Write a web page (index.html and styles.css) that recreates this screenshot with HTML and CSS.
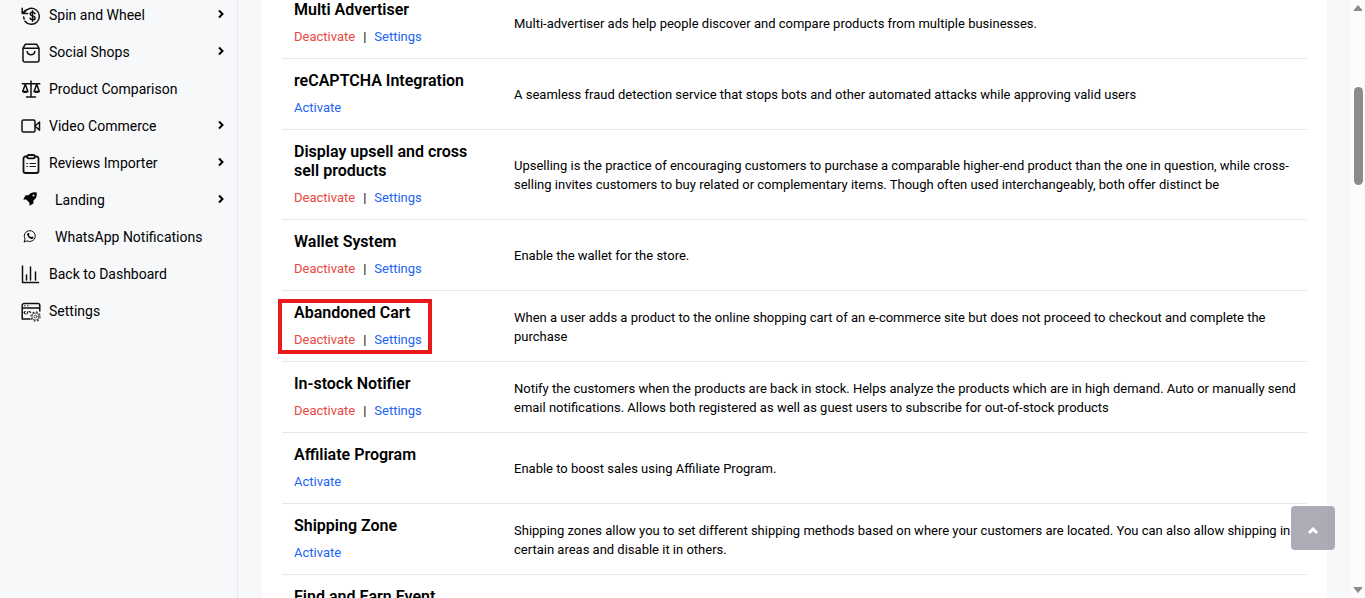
FILE: index.html
```
<!DOCTYPE html>
<html lang="en">
<head>
    <meta charset="UTF-8">
    <meta name="viewport" content="width=device-width, initial-scale=1.0">
    <title>Add-ons</title>
    <link rel="stylesheet" href="styles.css">
</head>
<body>
    <div class="page">
        <nav class="sidebar">
            <a class="menu-item" href="#">
                <svg class="menu-icon" viewBox="0 0 20 20">
                    <path d="M3.400 6.400A8 8 0 1 1 4 15.200M1.200 2.200v5.400h5.400M1.400 7.200l3-3M2.600 11l.6 2"/>
                    <path d="M14 7.600c-.4-1-1.300-1.400-2.500-1.400-1.400 0-2.400.6-2.400 1.800 0 2.600 5 1.200 5 3.900 0 1.200-1 1.900-2.500 1.900-1.300 0-2.300-.5-2.600-1.600M11.500 4.800v10.400"/>
                </svg>
                <span>Spin and Wheel</span>
                <svg class="arrow" viewBox="0 0 8 10"><path d="M2 1.500L5.500 5 2 8.500"/></svg>
            </a>
            <a class="menu-item" href="#">
                <svg class="menu-icon" viewBox="0 0 20 20">
                    <path d="M2 5.200L4.400 1.200h11.200L18 5.200V17a2 2 0 0 1-2 2H4a2 2 0 0 1-2-2zM2 5.200h16M6.200 8.600c.6 4.200 7 4.200 7.600 0"/>
                </svg>
                <span>Social Shops</span>
                <svg class="arrow" viewBox="0 0 8 10"><path d="M2 1.500L5.500 5 2 8.500"/></svg>
            </a>
            <a class="menu-item" href="#">
                <svg class="menu-icon" viewBox="0 0 20 20">
                    <path d="M10 1v16M5.500 17h9M1.200 3.800h17.600M4.300 4.200L1.700 11.500h5.200zM15.700 4.200l-2.600 7.300h5.200z"/>
                    <path class="solid" d="M1.200 11h6.200c-.5 2.800-5.700 2.800-6.200 0zM12.600 11h6.200c-.5 2.800-5.700 2.800-6.200 0z"/>
                </svg>
                <span>Product Comparison</span>
            </a>
            <a class="menu-item" href="#">
                <svg class="menu-icon" viewBox="0 0 20 20">
                    <rect x="1" y="3" width="13" height="12" rx="1.500"/>
                    <path d="M14 9l4.500-4v8.200z"/>
                </svg>
                <span>Video Commerce</span>
                <svg class="arrow" viewBox="0 0 8 10"><path d="M2 1.500L5.500 5 2 8.500"/></svg>
            </a>
            <a class="menu-item" href="#">
                <svg class="menu-icon bold" viewBox="0 0 20 20">
                    <path d="M6 2.500H4.500a2 2 0 0 0-2 2V17a2 2 0 0 0 2 2h11a2 2 0 0 0 2-2V4.500a2 2 0 0 0-2-2H14"/>
                    <rect x="6.200" y="1" width="7.600" height="3.400" rx="1.600"/>
                    <path class="thin" d="M5.800 9.500h.6M5.800 12.500h.6M9 9.500h5.500M9 12.500h5.500"/>
                </svg>
                <span>Reviews Importer</span>
                <svg class="arrow" viewBox="0 0 8 10"><path d="M2 1.500L5.500 5 2 8.500"/></svg>
            </a>
            <a class="menu-item small" href="#">
                <svg class="menu-icon" viewBox="0 0 14 14">
                    <path class="shape" fill-rule="evenodd" d="M13.600.4C9.800-.2 7.300 1 5.500 3.200H2.600L.2 7.500h3L6.500 10.800v3l3.900-2.400V8.500C13 6.700 14.200 4.200 13.600.4zM10.500 2.600a1 1 0 1 1 0 2 1 1 0 0 1 0-2z"/>
                </svg>
                <span>Landing</span>
                <svg class="arrow" viewBox="0 0 8 10"><path d="M2 1.500L5.500 5 2 8.500"/></svg>
            </a>
            <a class="menu-item small" href="#">
                <svg class="menu-icon" viewBox="0 0 14 14">
                    <path d="M1.200 12.800l.8-2.900a5.500 5.500 0 1 1 2.200 2.100z"/>
                    <path class="shape" d="M5 3.900l.8 0 .7 1.600-.6.8c.5 1 1.200 1.600 2.200 2l.8-.8 1.600.8c0 1.200-.8 1.700-1.700 1.700C6.500 9.800 4.200 7.300 4.200 5.300c0-.7.3-1.200.8-1.400z"/>
                </svg>
                <span>WhatsApp Notifications</span>
            </a>
            <a class="menu-item" href="#">
                <svg class="menu-icon" viewBox="0 0 20 20">
                    <path d="M1.500 1v16.500h16M5.500 15v-5M9.500 15V2M14.500 15V7"/>
                </svg>
                <span>Back to Dashboard</span>
            </a>
            <a class="menu-item" href="#">
                <svg class="menu-icon" viewBox="0 0 20 20">
                    <path d="M9 17H1.200V3.500a2 2 0 0 1 2-2h13.600a2 2 0 0 1 2 2V9M1.200 6h17.600"/>
                    <path class="thin" d="M3.500 3.800h.6M6.500 3.800h.6M4.200 9.500L3 10.700l1.200 1.200M7 9.500l-1 2.400M8.600 9.500l1 1"/>
                    <circle class="cog" cx="14.500" cy="14.500" r="4.600"/>
                    <circle class="ring" cx="14.500" cy="14.500" r="3.600"/>
                    <circle class="ring" cx="14.500" cy="14.500" r="1.400"/>
                </svg>
                <span>Settings</span>
            </a>
        </nav>

        <main class="content">
            <div class="panel">
                <table class="addons">
                    <tbody>
                        <tr>
                            <td class="name">
                                <h3>Multi Advertiser</h3>
                                <div class="actions"><a class="off" href="#">Deactivate</a><span>|</span><a href="#">Settings</a></div>
                            </td>
                            <td>Multi-advertiser ads help people discover and compare products from multiple businesses.</td>
                        </tr>
                        <tr>
                            <td class="name">
                                <h3>reCAPTCHA Integration</h3>
                                <div class="actions"><a href="#">Activate</a></div>
                            </td>
                            <td>A seamless fraud detection service that stops bots and other automated attacks while approving valid users</td>
                        </tr>
                        <tr>
                            <td class="name">
                                <h3>Display upsell and cross sell products</h3>
                                <div class="actions"><a class="off" href="#">Deactivate</a><span>|</span><a href="#">Settings</a></div>
                            </td>
                            <td>Upselling is the practice of encouraging customers to purchase a comparable higher-end product than the one in question, while cross-selling invites customers to buy related or complementary items. Though often used interchangeably, both offer distinct be</td>
                        </tr>
                        <tr>
                            <td class="name">
                                <h3>Wallet System</h3>
                                <div class="actions"><a class="off" href="#">Deactivate</a><span>|</span><a href="#">Settings</a></div>
                            </td>
                            <td>Enable the wallet for the store.</td>
                        </tr>
                        <tr>
                            <td class="name marked">
                                <h3>Abandoned Cart</h3>
                                <div class="actions"><a class="off" href="#">Deactivate</a><span>|</span><a href="#">Settings</a></div>
                            </td>
                            <td>When a user adds a product to the online shopping cart of an e-commerce site but does not proceed to checkout and complete the purchase</td>
                        </tr>
                        <tr>
                            <td class="name">
                                <h3>In-stock Notifier</h3>
                                <div class="actions"><a class="off" href="#">Deactivate</a><span>|</span><a href="#">Settings</a></div>
                            </td>
                            <td>Notify the customers when the products are back in stock. Helps analyze the products which are in high demand. Auto or manually send email notifications. Allows both registered as well as guest users to subscribe for out-of-stock products</td>
                        </tr>
                        <tr>
                            <td class="name">
                                <h3>Affiliate Program</h3>
                                <div class="actions"><a href="#">Activate</a></div>
                            </td>
                            <td>Enable to boost sales using Affiliate Program.</td>
                        </tr>
                        <tr>
                            <td class="name">
                                <h3>Shipping Zone</h3>
                                <div class="actions"><a href="#">Activate</a></div>
                            </td>
                            <td>Shipping zones allow you to set different shipping methods based on where your customers are located. You can also allow shipping in certain areas and disable it in others.</td>
                        </tr>
                        <tr>
                            <td class="name">
                                <h3>Find and Earn Event</h3>
                            </td>
                            <td></td>
                        </tr>
                    </tbody>
                </table>
            </div>
        </main>

        <div class="scrollbar">
            <svg class="scroll-arrow" viewBox="0 0 10 8"><path d="M5 1.500L9 6.500H1z"/></svg>
            <div class="thumb"></div>
            <svg class="scroll-arrow" viewBox="0 0 10 8"><path d="M5 6.500L9 1.500H1z"/></svg>
        </div>
    </div>

    <button class="to-top" type="button" aria-label="Back to top">
        <svg viewBox="0 0 12 8"><path d="M2 6l4-4 4 4"/></svg>
    </button>
</body>
</html>
```
FILE: styles.css
```
* {
    box-sizing: border-box;
}
body {
    margin: 0;
    font-family: Roboto, sans-serif;
    font-size: 13px;
    line-height: 19px;
    color: #000;
    background-color: #f7f8fa;
}
a {
    color: #1b64f5;
    text-decoration: none;
}
.page {
    display: flex;
    height: 100vh;
    overflow: hidden;
}

/* left menu */
.sidebar {
    flex: none;
    width: 238px;
    margin-top: -3px;
    border-right: 1px solid #e6e8ee;
}
.menu-item {
    display: flex;
    align-items: center;
    height: 37px;
    padding: 0 12px 0 21px;
    font-size: 14px;
    color: #000;
}
.menu-icon {
    width: 20px;
    height: 20px;
    margin-right: 8px;
    fill: none;
    stroke: #111;
    stroke-width: 1.5;
    stroke-linecap: round;
    stroke-linejoin: round;
}
.menu-icon.bold {
    stroke-width: 1.8;
}
.menu-icon .thin {
    stroke-width: 1.1;
}
.menu-icon .ring {
    stroke: #444;
    stroke-width: 0.9;
}
.menu-icon .cog {
    stroke: #444;
    stroke-width: 1.3;
    stroke-linecap: butt;
    stroke-dasharray: 1.8 1.8;
}
.menu-icon .shape {
    fill: #000;
    stroke: none;
}
.menu-icon .solid {
    fill: #111;
    stroke: none;
}
.small .menu-icon {
    width: 14px;
    height: 14px;
    margin: 0 18px 4px 2px;
    stroke-width: 1;
}
.arrow {
    width: 8px;
    height: 10px;
    margin: 0 0 3px auto;
    fill: none;
    stroke: #000;
    stroke-width: 2;
}

/* add-on list */
.content {
    flex: 1;
    min-width: 0;
    padding: 0 24px;
}
.panel {
    min-height: 100%;
    padding: 0 20px;
    background-color: #fff;
}
.addons {
    position: relative;
    top: -12px;
    width: 100%;
    border-collapse: separate;
    border-spacing: 0;
}
.addons td {
    padding: 12px 8px 11px 12px;
    vertical-align: middle;
    border-bottom: 1px solid #e6e8ee;
}
.addons .name {
    width: 220px;
    padding-right: 12px;
}
.addons h3 {
    margin: 0 0 8px;
    font-size: 16px;
    font-weight: 600;
    line-height: 19px;
}
.actions {
    display: flex;
    gap: 8px;
    line-height: 20px;
}
.actions .off {
    color: #e8493f;
}
.addons .marked {
    position: relative;
}
.marked::after {
    content: '';
    position: absolute;
    top: 8px;
    left: -4px;
    box-sizing: border-box;
    width: 154px;
    height: 55px;
    border: 4px solid #e8191c;
    pointer-events: none;
}

/* page scrollbar */
.scrollbar {
    display: flex;
    flex: none;
    flex-direction: column;
    align-items: center;
    width: 14px;
    padding: 4px 0;
    background-color: #fcfcfc;
}
.scroll-arrow {
    width: 10px;
    height: 8px;
    fill: #8b8b8b;
    stroke: #8b8b8b;
    stroke-linejoin: round;
}
.thumb {
    width: 9px;
    height: 98px;
    margin: 75px 0 auto;
    border-radius: 5px;
    background-color: #8b8b8b;
}

.to-top {
    position: fixed;
    right: 30px;
    bottom: 48px;
    display: flex;
    align-items: center;
    justify-content: center;
    width: 44px;
    height: 44px;
    padding: 6px 0 0;
    border: none;
    border-radius: 4px;
    background-color: rgba(143, 144, 156, 0.75);
}
.to-top svg {
    width: 12px;
    height: 8px;
    fill: none;
    stroke: #fff;
    stroke-width: 3;
}
```
